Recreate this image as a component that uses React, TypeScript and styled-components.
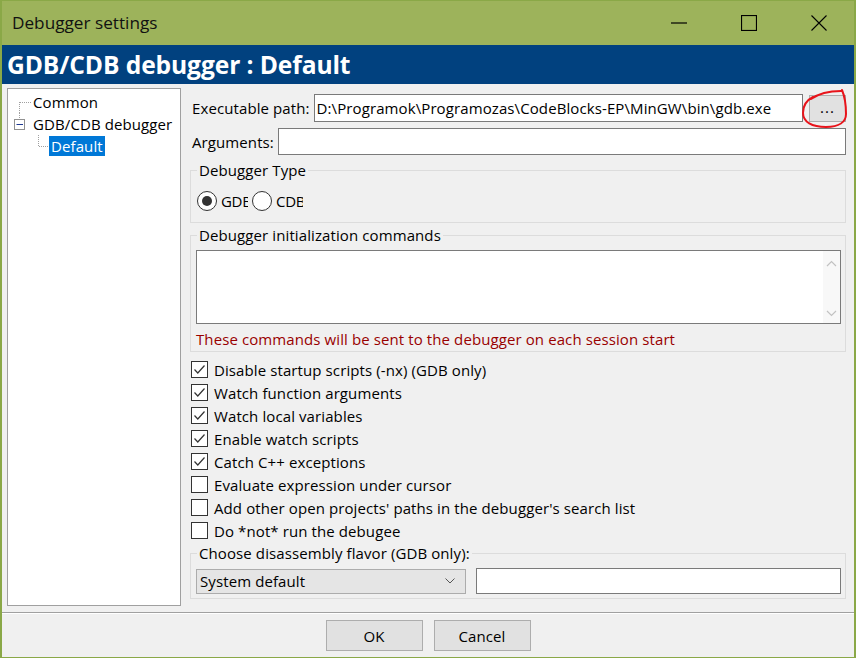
import React from 'react';
import styled, { createGlobalStyle } from 'styled-components';

const Global = createGlobalStyle`
  html, body { margin: 0; padding: 0; width: 856px; height: 658px; overflow: hidden; background: #f0f0f0; }
  body { font-family: "Open Sans", "Noto Sans", "Liberation Sans", sans-serif; font-size: 15px; letter-spacing: 0.1px; color: #000; }
  * { box-sizing: border-box; }
`;

const Window = styled.div`
  position: relative;
  width: 856px;
  height: 658px;
  border: 1px solid #8aa847;
  border-left-width: 2px;
  border-right-width: 2px;
  background: #f0f0f0;
  display: flex;
  flex-direction: column;
`;

const TitleBar = styled.div`
  height: 44px;
  background: #9db35b;
  display: flex;
  align-items: center;
  padding-left: 10px;
`;

const TitleText = styled.div`
  flex: 1;
  font-family: "Open Sans", sans-serif;
  font-size: 17.2px;
  letter-spacing: 0;
  color: #111;
  margin-top: -2px;
`;

const CaptionButton = styled.div`
  width: 70px;
  height: 44px;
  display: flex;
  align-items: center;
  justify-content: center;
`;

const Header = styled.div`
  height: 39px;
  background: #01417f;
  color: #fff;
  font-family: "Open Sans", sans-serif;
  font-weight: 700;
  font-size: 24.6px;
  display: flex;
  align-items: center;
  padding-left: 5px;
  letter-spacing: -0.1px;
`;

const Body = styled.div`
  flex: 1;
  display: flex;
  gap: 9px;
  padding: 4px 8px 6px 5px;
  border-bottom: 1px solid #a0a0a0;
`;

const Tree = styled.div`
  width: 174px;
  background: #fff;
  border: 1px solid #a0a0a0;
  padding-top: 2px;
  display: flex;
  flex-direction: column;
`;

const TreeRow = styled.div`
  height: 22px;
  display: flex;
  align-items: center;
`;

const TreeLabel = styled.span<{ $selected?: boolean }>`
  padding: 0 2px;
  height: 20px;
  line-height: 20px;
  background: ${p => (p.$selected ? '#0078d7' : 'transparent')};
  color: ${p => (p.$selected ? '#fff' : '#000')};
  margin-left: ${p => (p.$selected ? '0' : '-2px')};
`;

const Right = styled.div`
  flex: 1;
  display: flex;
  flex-direction: column;
  padding-top: 6px;
`;

const FieldRow = styled.div<{ $mt?: number; $h: number }>`
  display: flex;
  align-items: center;
  height: ${p => p.$h}px;
  margin-top: ${p => p.$mt ?? 0}px;
  padding-left: 2px;
`;

const Label = styled.span`
  white-space: nowrap;
  margin-right: 4px;
`;

const TextInput = styled.div<{ $w?: number; $h: number }>`
  height: ${p => p.$h}px;
  ${p => (p.$w ? `width: ${p.$w}px;` : 'flex: 1;')}
  background: #fff;
  border: 1px solid #7a7a7a;
  display: flex;
  align-items: center;
  padding-left: 2px;
  white-space: nowrap;
  overflow: hidden;
`;

const BrowseButton = styled.div`
  width: 37px;
  height: 27px;
  margin-left: 6px;
  background: #e1e1e1;
  border: 1px solid #adadad;
  display: flex;
  align-items: center;
  justify-content: center;
  padding-bottom: 2px;
  letter-spacing: 1px;
`;

const Group = styled.fieldset<{ $mt?: number; $pb?: number }>`
  margin: ${p => p.$mt ?? 0}px 0 0 0;
  padding: 0 4px ${p => p.$pb ?? 0}px 5px;
  border: 1px solid #dcdcdc;
  min-width: 0;
`;

const Legend = styled.legend`
  padding: 0 2px;
  margin-left: 1px;
  line-height: 20px;
  height: 20px;
`;

const RadioRow = styled.div`
  display: flex;
  align-items: center;
  height: 21px;
  margin-top: 10px;
  padding-left: 1px;
`;

const Radio = styled.span<{ $on?: boolean }>`
  width: 20px;
  height: 20px;
  border-radius: 50%;
  border: 1px solid #333;
  background: #fff;
  display: flex;
  align-items: center;
  justify-content: center;
  &::after {
    content: '';
    width: 10px;
    height: 10px;
    border-radius: 50%;
    background: ${p => (p.$on ? '#333' : 'transparent')};
  }
`;

const ClippedLabel = styled.span`
  width: 27px;
  overflow: hidden;
  white-space: nowrap;
  margin-left: 4px;
  margin-right: 4px;
  letter-spacing: -0.3px;
`;

const TextArea = styled.div`
  margin-top: 5px;
  height: 74px;
  background: #fff;
  border: 1px solid #7a7a7a;
  display: flex;
  justify-content: flex-end;
`;

const ScrollBar = styled.div`
  width: 17px;
  background: #f8f8f8;
  display: flex;
  flex-direction: column;
  justify-content: space-between;
  align-items: center;
  padding: 9px 0 6px;
`;

const Note = styled.div`
  color: #990000;
  height: 20px;
  line-height: 20px;
  margin-top: 5px;
  margin-bottom: 2px;
`;

const Checks = styled.div`
  margin-top: 6px;
  display: flex;
  flex-direction: column;
  padding-left: 1px;
`;

const CheckRow = styled.label`
  height: 23px;
  display: flex;
  align-items: center;
`;

const Box = styled.span`
  width: 17px;
  height: 17px;
  border: 1px solid #333;
  background: #fff;
  display: flex;
  align-items: center;
  justify-content: center;
  margin-right: 6px;
`;

const SelectRow = styled.div`
  display: flex;
  gap: 10px;
  align-items: center;
  margin-top: 5px;
`;

const Select = styled.div`
  width: 270px;
  height: 25px;
  background: #e5e5e5;
  border: 1px solid #acacac;
  display: flex;
  align-items: center;
  justify-content: space-between;
  padding: 0 10px 0 3px;
`;

const Footer = styled.div`
  height: 44px;
  border-top: 1px solid #fff;
  display: flex;
  justify-content: center;
  gap: 11px;
  padding-top: 6px;
`;

const DlgButton = styled.div`
  width: 97px;
  height: 31px;
  background: #e1e1e1;
  border: 1px solid #adadad;
  display: flex;
  align-items: center;
  justify-content: center;
`;

const Annotation = styled.svg`
  position: absolute;
  left: -2px;
  top: -1px;
  pointer-events: none;
`;

const Chevron = ({ up }: { up?: boolean }) => (
  <svg width="11" height="7" viewBox="0 0 11 7">
    <polyline
      points={up ? '1,6 5.5,1.5 10,6' : '1,1 5.5,5.5 10,1'}
      fill="none"
      stroke="#c2c2c2"
      strokeWidth="1.2"
    />
  </svg>
);

const Check = () => (
  <svg width="13" height="11" viewBox="0 0 13 11">
    <polyline points="1.5,5.5 4.8,9 11.5,1.5" fill="none" stroke="#333" strokeWidth="1.2" />
  </svg>
);

const checks: [string, boolean][] = [
  ['Disable startup scripts (-nx) (GDB only)', true],
  ['Watch function arguments', true],
  ['Watch local variables', true],
  ['Enable watch scripts', true],
  ['Catch C++ exceptions', true],
  ['Evaluate expression under cursor', false],
  ["Add other open projects' paths in the debugger's search list", false],
  ['Do *not* run the debugee', false],
];

const dot = { stroke: '#a0a0a0', strokeDasharray: '1 1', strokeWidth: 1 };

export default function App() {
  return (
    <>
      <Global />
      <Window>
        <TitleBar>
          <TitleText>Debugger settings</TitleText>
          <CaptionButton>
            <svg width="16" height="2"><line x1="0" y1="1" x2="16" y2="1" stroke="#000" strokeWidth="1.2" /></svg>
          </CaptionButton>
          <CaptionButton>
            <svg width="16" height="16"><rect x="0.5" y="0.5" width="15" height="15" fill="none" stroke="#000" strokeWidth="1.2" /></svg>
          </CaptionButton>
          <CaptionButton>
            <svg width="16" height="16"><path d="M0.5 0.5 L15.5 15.5 M15.5 0.5 L0.5 15.5" stroke="#000" strokeWidth="1.1" /></svg>
          </CaptionButton>
        </TitleBar>
        <Header>GDB/CDB debugger : Default</Header>
        <Body>
          <Tree>
            <TreeRow>
              <svg width="25" height="22">
                <line x1="11.5" y1="11" x2="11.5" y2="22" style={dot} />
                <line x1="12" y1="11.5" x2="24" y2="11.5" style={dot} />
              </svg>
              <TreeLabel>Common</TreeLabel>
            </TreeRow>
            <TreeRow>
              <svg width="25" height="22">
                <line x1="11.5" y1="0" x2="11.5" y2="6" style={dot} />
                <rect x="6.5" y="6.5" width="10" height="10" fill="#fff" stroke="#919191" />
                <line x1="8.5" y1="11.5" x2="15" y2="11.5" stroke="#1f3a93" strokeWidth="1" />
              </svg>
              <TreeLabel>GDB/CDB debugger</TreeLabel>
            </TreeRow>
            <TreeRow>
              <svg width="41" height="22">
                <line x1="30.5" y1="0" x2="30.5" y2="11" style={dot} />
                <line x1="31" y1="11.5" x2="41" y2="11.5" style={dot} />
              </svg>
              <TreeLabel $selected>Default</TreeLabel>
            </TreeRow>
          </Tree>
          <Right>
            <FieldRow $h={28}>
              <Label>Executable path:</Label>
              <TextInput $h={28}>D:\Programok\Programozas\CodeBlocks-EP\MinGW\bin\gdb.exe</TextInput>
              <BrowseButton>...</BrowseButton>
            </FieldRow>
            <FieldRow $h={27} $mt={6}>
              <Label>Arguments:</Label>
              <TextInput $h={27} />
            </FieldRow>
            <Group $mt={5} $pb={11}>
              <Legend>Debugger Type</Legend>
              <RadioRow>
                <Radio $on />
                <ClippedLabel>GDB</ClippedLabel>
                <Radio />
                <ClippedLabel>CDB</ClippedLabel>
              </RadioRow>
            </Group>
            <Group $mt={2}>
              <Legend>Debugger initialization commands</Legend>
              <TextArea>
                <ScrollBar>
                  <Chevron up />
                  <Chevron />
                </ScrollBar>
              </TextArea>
              <Note>These commands will be sent to the debugger on each session start</Note>
            </Group>
            <Checks>
              {checks.map(([t, on]) => (
                <CheckRow key={t}>
                  <Box>{on && <Check />}</Box>
                  <span>{t}</span>
                </CheckRow>
              ))}
            </Checks>
            <Group $mt={1} $pb={4}>
              <Legend>Choose disassembly flavor (GDB only):</Legend>
              <SelectRow>
                <Select>
                  <span>System default</span>
                  <svg width="10" height="6" viewBox="0 0 10 6">
                    <polyline points="0.5,0.5 5,5 9.5,0.5" fill="none" stroke="#555" strokeWidth="1" />
                  </svg>
                </Select>
                <TextInput $h={26} />
              </SelectRow>
            </Group>
          </Right>
        </Body>
        <Footer>
          <DlgButton>OK</DlgButton>
          <DlgButton>Cancel</DlgButton>
        </Footer>
        <Annotation width="856" height="658">
          <path
            d="M813 97 C807 100, 803 106, 803 113 C803 122, 812 127, 826 127 C839 127, 846 122, 846 114 C846 105, 845 97, 842 90 M811 99 C818 94, 828 91, 841 91"
            fill="none"
            stroke="#e8141b"
            strokeWidth="2"
            strokeLinecap="round"
          />
        </Annotation>
      </Window>
    </>
  );
}
